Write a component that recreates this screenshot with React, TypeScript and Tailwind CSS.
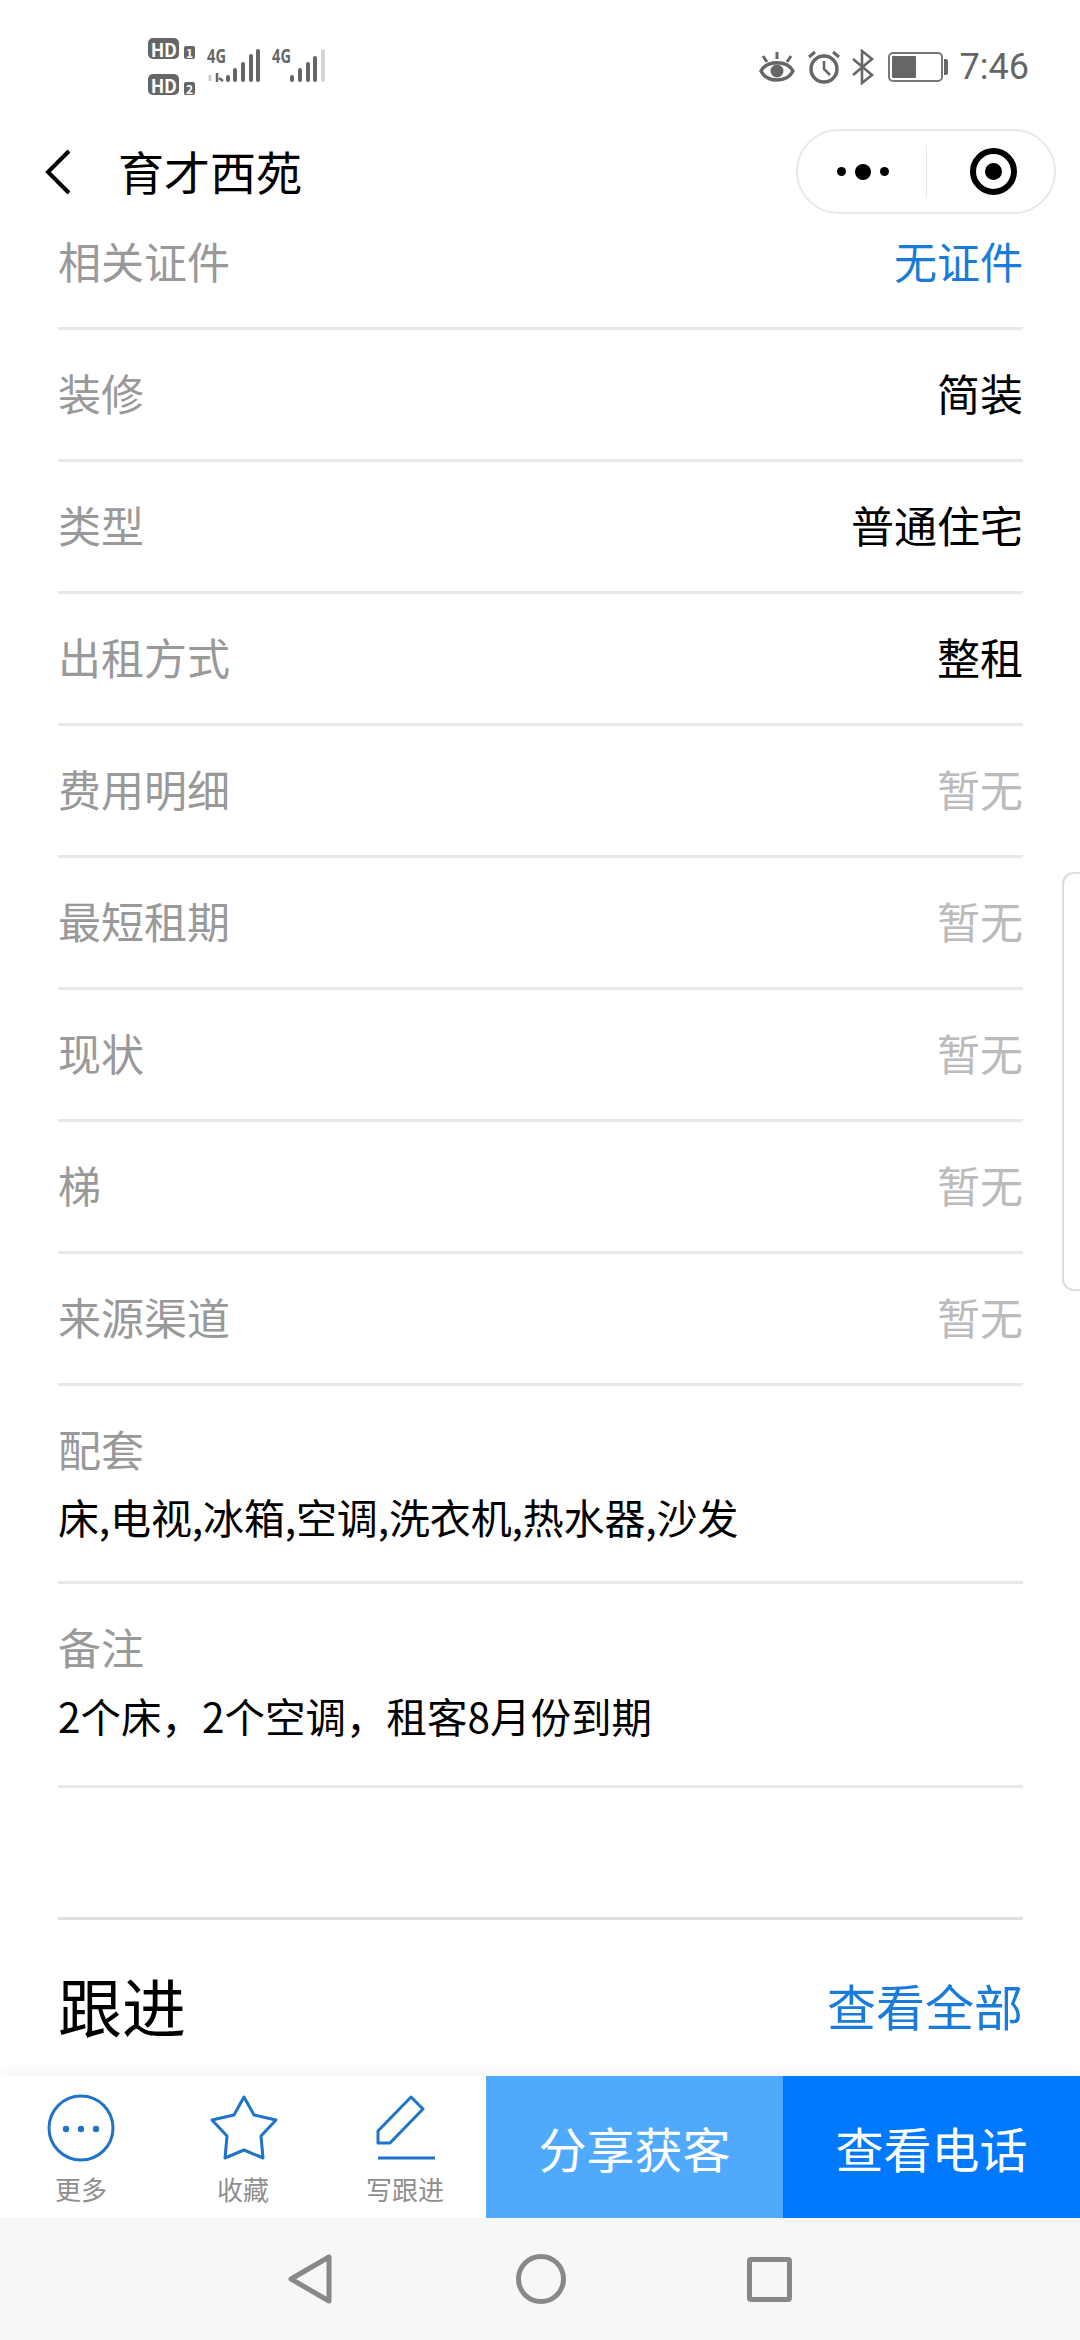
import React from "react";

const font = { fontFamily: '"Noto Sans CJK SC", "Noto Sans", sans-serif' };

const rows = [
  { label: "装修", value: "简装", tone: "text-black" },
  { label: "类型", value: "普通住宅", tone: "text-black" },
  { label: "出租方式", value: "整租", tone: "text-black" },
  { label: "费用明细", value: "暂无", tone: "text-[#bbbbbb]" },
  { label: "最短租期", value: "暂无", tone: "text-[#bbbbbb]" },
  { label: "现状", value: "暂无", tone: "text-[#bbbbbb]" },
  { label: "梯", value: "暂无", tone: "text-[#bbbbbb]" },
  { label: "来源渠道", value: "暂无", tone: "text-[#bbbbbb]" },
];

function Row({ label, value, tone }: { label: string; value: string; tone: string }) {
  return (
    <div className="flex h-[132px] items-center justify-between border-b-[3px] border-[#e8e8e8] pb-[4px] text-[43px]">
      <span className="text-[#999999]">{label}</span>
      <span className={tone}>{value}</span>
    </div>
  );
}

function HdBadge({ n }: { n: string }) {
  return (
    <div className="flex items-end gap-[5px]">
      <div className="flex h-[21px] w-[31px] items-center justify-center rounded-[5px] bg-[#666666] text-[18px] font-bold leading-none tracking-tight text-white">
        HD
      </div>
      <div className="flex h-[13px] w-[11px] items-center justify-center rounded-[2px] bg-[#666666] text-[12px] font-bold leading-none text-white">
        {n}
      </div>
    </div>
  );
}

function Signals() {
  return (
    <svg width="122" height="50" viewBox="0 0 122 50" className="ml-[12px]">
      <text x="0" y="25" fontSize="20" fontWeight="700" fill="#666" textLength="19" lengthAdjust="spacingAndGlyphs" fontFamily="Noto Sans">4G</text>
      <path d="M3 37 L3 43" stroke="#cccccc" strokeWidth="3" />
      <path d="M10 35 L10 44 M12 40 L16 43" stroke="#666" strokeWidth="2.5" />
      <g stroke="#666" strokeWidth="4" strokeLinecap="round">
        <path d="M21 39 L21 42" />
        <path d="M28 32 L28 42" />
        <path d="M36 26 L36 42" />
        <path d="M44 18 L44 42" />
        <path d="M51 13 L51 42" />
      </g>
      <text x="65" y="25" fontSize="20" fontWeight="700" fill="#666" textLength="19" lengthAdjust="spacingAndGlyphs" fontFamily="Noto Sans">4G</text>
      <g stroke="#666" strokeWidth="4" strokeLinecap="round">
        <path d="M85 39 L85 42" />
        <path d="M93 32 L93 42" />
        <path d="M101 26 L101 42" />
        <path d="M108 20 L108 42" />
      </g>
      <path d="M116 13 L116 42" stroke="#d4d4d4" strokeWidth="4" strokeLinecap="round" />
    </svg>
  );
}

function StatusRight() {
  return (
    <div className="flex items-center">
      <svg width="36" height="32" viewBox="0 0 36 32" className="mr-[12px]">
        <path d="M2 20 C8 9 28 9 34 20 C28 32 8 32 2 20 Z" fill="none" stroke="#666" strokeWidth="3.5" />
        <circle cx="18" cy="20" r="6.5" fill="#666" />
        <path d="M18 1 V8 M4 5 L8 11 M32 5 L28 11" stroke="#666" strokeWidth="3" />
      </svg>
      <svg width="34" height="34" viewBox="0 0 34 34" className="mr-[10px]">
        <circle cx="17" cy="19" r="13" fill="none" stroke="#666" strokeWidth="3.5" />
        <path d="M17 11 V19 L23 25" fill="none" stroke="#666" strokeWidth="2.5" />
        <path d="M2 7 L8 2 M32 7 L26 2" stroke="#666" strokeWidth="3" />
      </svg>
      <svg width="24" height="36" viewBox="0 0 24 36" className="mr-[13px]">
        <path d="M2 10 L21 26 L11 34 V2 L21 10 L2 26" fill="none" stroke="#666" strokeWidth="2.6" />
      </svg>
      <div className="mr-[1px] flex h-[30px] w-[55px] items-center rounded-[5px] border-2 border-[#777777] p-[2px]">
        <div className="h-full w-[24px] rounded-[1px] bg-[#666666]" />
      </div>
      <div className="mr-[12px] h-[16px] w-[4px] rounded-r-[2px] bg-[#666666]" />
      <span className="text-[36px] leading-none text-[#666666]" style={{ fontFamily: "Roboto, sans-serif" }}>7:46</span>
    </div>
  );
}

function TabItem({ label, children }: { label: string; children: React.ReactNode }) {
  return (
    <div className="flex flex-1 flex-col items-center pt-[17px]">
      <div className="flex h-[70px] items-center">{children}</div>
      <span className="mt-[8px] text-[26px] leading-[36px] text-[#8e8e8e]">{label}</span>
    </div>
  );
}

export default function App() {
  return (
    <div className="relative flex h-[2340px] w-[1080px] flex-col overflow-hidden bg-white" style={font}>
      {/* status bar */}
      <div className="flex h-[130px] shrink-0 items-start justify-between pl-[148px] pr-[51px] pt-[38px]">
        <div className="flex">
          <div className="flex flex-col gap-[15px]">
            <HdBadge n="1" />
            <HdBadge n="2" />
          </div>
          <Signals />
        </div>
        <div className="mt-[11px]">
          <StatusRight />
        </div>
      </div>

      {/* title bar */}
      <div className="relative z-10 -mt-[1px] flex h-[68px] shrink-0 items-start justify-between pl-[44px] pr-[24px]">
        <div className="flex h-[85px] items-center">
          <svg width="30" height="46" viewBox="0 0 30 46" className="mr-[44px]">
            <path d="M25 2 L4 23 L25 44" fill="none" stroke="#000" strokeWidth="4" />
          </svg>
          <span className="pb-[2px] text-[46px] text-black">育才西苑</span>
        </div>
        <div className="flex h-[85px] w-[260px] items-center rounded-full border-2 border-[#e8e8e8]">
          <div className="flex w-[128px] items-center justify-center gap-[9px] pl-[2px]">
            <span className="h-[9px] w-[9px] rounded-full bg-black" />
            <span className="h-[16px] w-[16px] rounded-full bg-black" />
            <span className="h-[9px] w-[9px] rounded-full bg-black" />
          </div>
          <div className="h-[53px] w-px bg-[#e8e8e8]" />
          <div className="flex flex-1 items-center justify-center pl-[6px]">
            <div className="flex h-[47px] w-[47px] items-center justify-center rounded-full border-[6px] border-black">
              <span className="h-[17px] w-[17px] rounded-full bg-black" />
            </div>
          </div>
        </div>
      </div>

      {/* detail list */}
      <div className="flex-1 overflow-hidden pl-[58px] pr-[57px] pt-[1px]">
        <Row label="相关证件" value="无证件" tone="text-[#1a7bd8]" />
        {rows.map((r) => (
          <Row key={r.label} {...r} />
        ))}
        <div className="flex h-[198px] flex-col border-b-[3px] border-[#e8e8e8] pt-[32px]">
          <span className="text-[43px] leading-[60px] text-[#999999]">配套</span>
          <span className="mt-[8px] text-[41px] leading-[60px] tracking-[-0.15px] text-black">床,电视,冰箱,空调,洗衣机,热水器,沙发</span>
        </div>
        <div className="flex h-[204px] flex-col border-b-[3px] border-[#e8e8e8] pt-[32px]">
          <span className="text-[43px] leading-[60px] text-[#999999]">备注</span>
          <span className="mt-[10px] text-[40.5px] leading-[60px] text-black">2个床，2个空调，租客8月份到期</span>
        </div>
        <div className="h-[132px] border-b-[3px] border-[#e0e0e0]" />
        <div className="flex h-[126px] items-center justify-between pt-[42px]">
          <span className="text-[64px] leading-none text-black">跟进</span>
          <span className="text-[49px] leading-none text-[#1a7bd8]">查看全部</span>
        </div>
      </div>

      {/* bottom actions */}
      <div className="relative flex h-[142px] shrink-0 shadow-[0_-6px_14px_rgba(0,0,0,0.04)]">
        <div className="flex w-[486px] bg-white">
          <TabItem label="更多">
            <svg width="68" height="68" viewBox="0 0 68 68">
              <circle cx="34" cy="34" r="32" fill="none" stroke="#1f74c9" strokeWidth="3" />
              <circle cx="19" cy="35" r="3.2" fill="#1f74c9" />
              <circle cx="34" cy="35" r="3.2" fill="#1f74c9" />
              <circle cx="49" cy="35" r="3.2" fill="#1f74c9" />
            </svg>
          </TabItem>
          <TabItem label="收藏">
            <svg width="68" height="66" viewBox="0 0 68 66" className="ml-[2px]">
              <path d="M34 2 L44 20 L66 25 L51 41 L53 63 L34 55 L15 63 L17 41 L2 25 L24 20 Z" fill="none" stroke="#1f74c9" strokeWidth="3" strokeLinejoin="round" />
            </svg>
          </TabItem>
          <TabItem label="写跟进">
            <svg width="60" height="66" viewBox="0 0 60 66">
              <path d="M36 2 L48 14 L15 48 L3 48 L3 36 Z" fill="none" stroke="#1f74c9" strokeWidth="3" strokeLinejoin="round" />
              <path d="M3 63 H60" stroke="#1f74c9" strokeWidth="3" />
            </svg>
          </TabItem>
        </div>
        <div className="flex w-[297px] items-center justify-center bg-[#4faafd] text-[48px] text-white">分享获客</div>
        <div className="flex flex-1 items-center justify-center bg-[#0079fe] text-[48px] text-white">查看电话</div>
      </div>

      {/* android nav bar */}
      <div className="flex h-[122px] shrink-0 items-center justify-center bg-[#f7f7f7]">
        <svg width="44" height="50" viewBox="0 0 44 50" className="mr-[184px]">
          <path d="M3 25 L41 3 V47 Z" fill="none" stroke="#888" strokeWidth="5" strokeLinejoin="round" />
        </svg>
        <div className="mr-[181px] h-[50px] w-[50px] rounded-full border-[5px] border-[#888888]" />
        <div className="h-[45px] w-[45px] rounded-[4px] border-[5px] border-[#888888]" />
      </div>

      {/* side handle */}
      <div className="absolute right-0 top-[872px] h-[419px] w-[18px] rounded-l-[12px] border-y-2 border-l-2 border-[#dddddd]" />
    </div>
  );
}
